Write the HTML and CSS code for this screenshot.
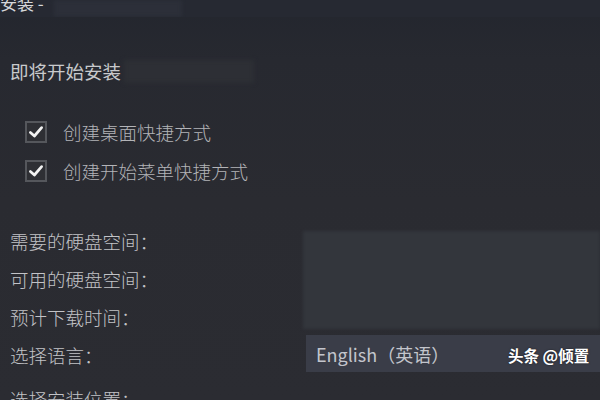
FILE: index.html
```html
<!DOCTYPE html>
<html lang="zh-CN">

<head>
  <meta charset="UTF-8">
  <meta name="viewport" content="width=device-width, initial-scale=1.0">
  <title>安装</title>
  <link rel="stylesheet" href="styles.css">
</head>

<body>
  <div class="titlebar">
    <span class="title">安装 -</span>
    <span class="title-blur"></span>
  </div>

  <main class="content">
    <div class="intro">
      <span>即将开始安装</span>
      <span class="intro-blur"></span>
    </div>

    <ul class="options">
      <li class="option">
        <span class="checkbox">
          <svg viewBox="0 0 20 20" width="16" height="16"><polyline points="3,10.5 8,15 17,4.5" /></svg>
        </span>
        创建桌面快捷方式
      </li>
      <li class="option">
        <span class="checkbox">
          <svg viewBox="0 0 20 20" width="16" height="16"><polyline points="3,10.5 8,15 17,4.5" /></svg>
        </span>
        创建开始菜单快捷方式
      </li>
    </ul>

    <div class="info">
      <div class="label">需要的硬盘空间：</div>
      <div class="details-blur"></div>
      <div class="label">可用的硬盘空间：</div>
      <div class="label">预计下载时间：</div>
      <div class="label">选择语言：</div>
      <div class="select">English（英语）</div>
      <div class="label last">选择安装位置：</div>
    </div>
  </main>

  <div class="watermark">头条 @倾置</div>
</body>

</html>
```

FILE: styles.css
```css
body {
  margin: 0;
  width: 600px;
  height: 400px;
  overflow: hidden;
  position: relative;
  background: linear-gradient(#23262e 0px, #272930 60px, #2a2b31 200px, #2b2c32 400px);
  font-family: "Noto Sans CJK SC", "Noto Sans", sans-serif;
  color: #c4c5c9;
}

.titlebar {
  height: 17px;
  display: flex;
  overflow: hidden;
  background: #262932;
}

.title {
  font-size: 17px;
  line-height: 17px;
  margin-top: -6px;
  color: #d6d7da;
  white-space: pre;
}

.title-blur {
  width: 128px;
  height: 17px;
  margin-left: 10px;
  background: #2c2f39;
  filter: blur(2px);
}

.content {
  padding: 0 0 0 10px;
}

.intro {
  display: flex;
  align-items: center;
  margin-top: 42px;
  height: 24px;
  font-size: 18.5px;
  color: #c8c9cc;
}

.intro-blur {
  width: 130px;
  height: 23px;
  margin-left: 3px;
  background: #2d2f35;
  filter: blur(2px);
}

.options {
  list-style: none;
  margin: 29px 0 0 15px;
  padding: 0;
}

.option {
  display: flex;
  align-items: center;
  height: 39px;
  font-size: 18.5px;
  font-weight: 300;
  color: #b3b4b8;
}

.checkbox {
  width: 18px;
  height: 18px;
  margin-right: 16px;
  border: 2px solid #55575c;
  background: #2e2f34;
  display: flex;
  align-items: center;
  justify-content: center;
}

.checkbox polyline {
  fill: none;
  stroke: #f2f2f2;
  stroke-width: 3.4;
  stroke-linecap: round;
  stroke-linejoin: round;
}

.info {
  display: grid;
  grid-template-columns: 293px 1fr;
  grid-auto-rows: 38px;
  margin-top: 32px;
  font-size: 18.5px;
  font-weight: 300;
}

.label {
  grid-column: 1;
  display: flex;
  align-items: center;
  color: #c2c3c7;
}

.label.last {
  margin-top: 12px;
}

.details-blur {
  grid-column: 2;
  grid-row: 1 / span 3;
  margin: 9px 0 7px 0;
  background: #33363c;
  filter: blur(1.5px);
}

.select {
  grid-column: 2;
  grid-row: 4;
  margin: -1px 0 0 3px;
  height: 37px;
  display: flex;
  align-items: center;
  padding-left: 10px;
  background: #3a3d48;
  color: #c3c5cc;
  font-size: 18px;
  font-weight: 400;
}

.watermark {
  position: absolute;
  left: 508px;
  top: 344px;
  font-size: 15.5px;
  font-weight: bold;
  color: #ffffff;
  text-shadow: 0 0 2px rgba(0, 0, 0, 0.6);
}
```
